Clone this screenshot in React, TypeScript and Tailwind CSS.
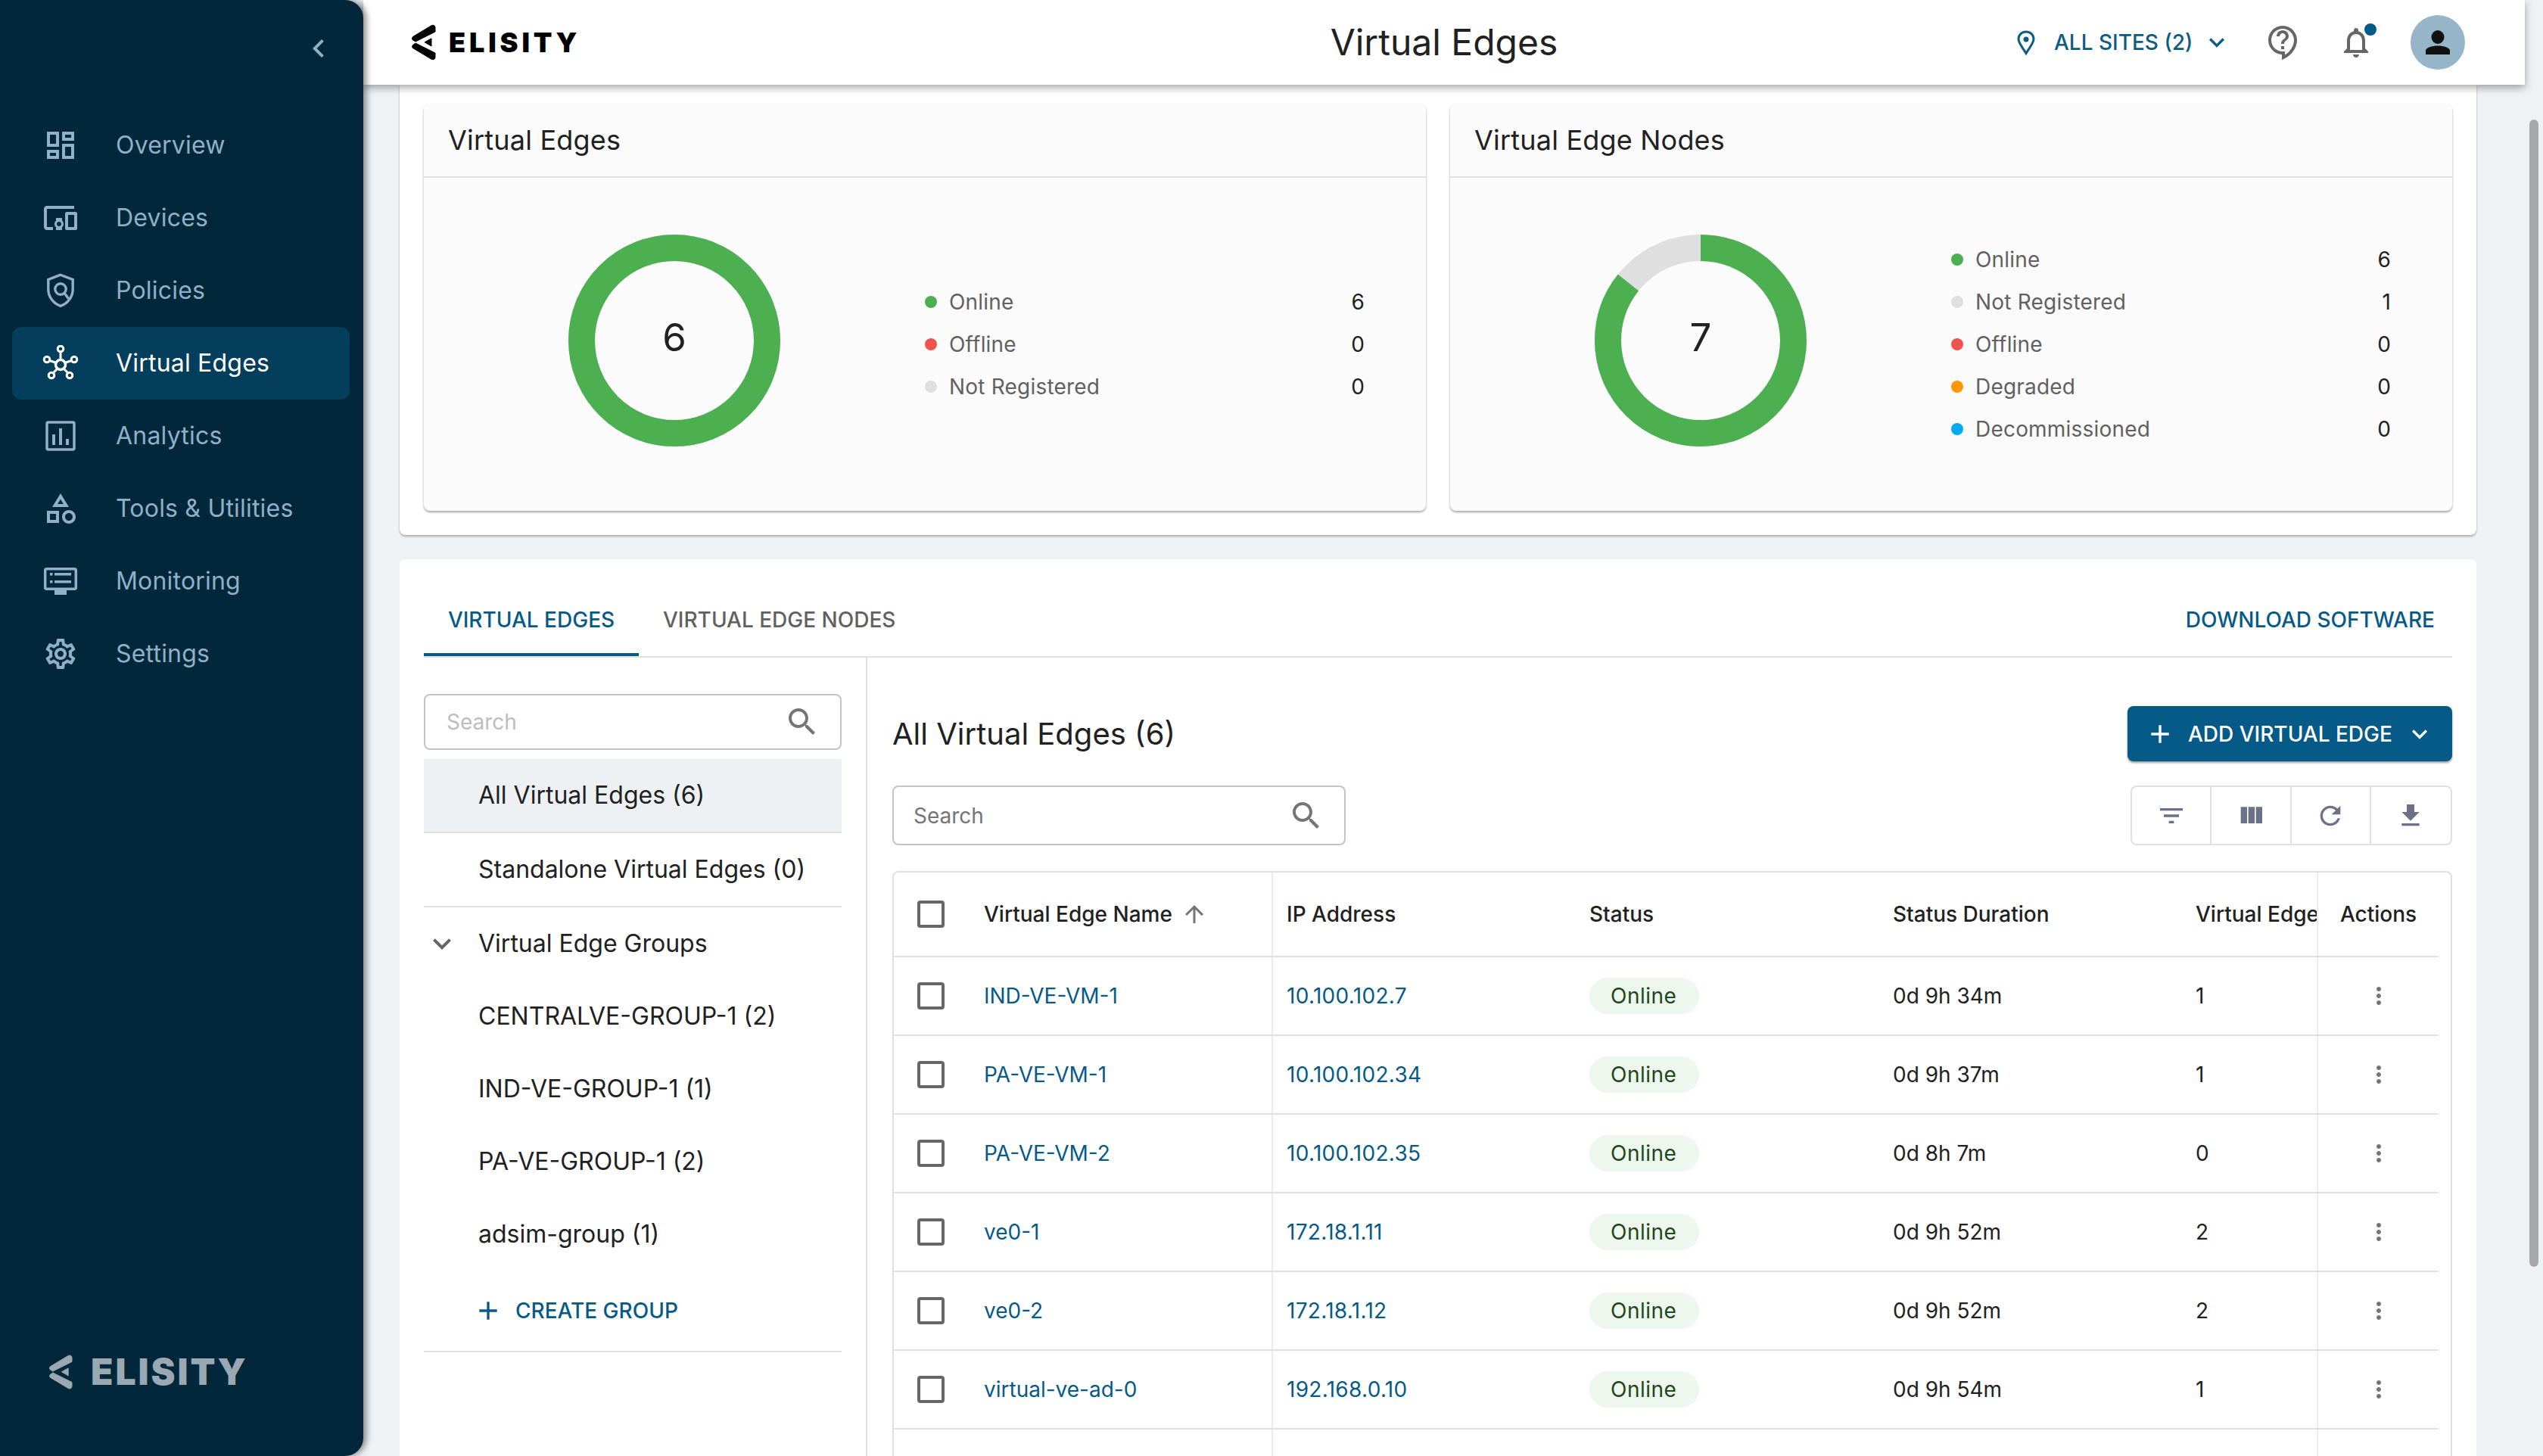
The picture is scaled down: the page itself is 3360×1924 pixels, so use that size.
import type { ReactNode } from "react"

const Icon = ({ d, className }: { d: string; className: string }) => (
  <svg viewBox="0 0 24 24" fill="currentColor" className={className}>
    <path d={d} />
  </svg>
)

const paths = {
  dashboard:
    "M19 5v2h-4V5h4M9 5v6H5V5h4m10 8v6h-4v-6h4M9 17v2H5v-2h4M21 3h-8v6h8V3zM11 3H3v10h8V3zm10 8h-8v10h8V11zm-10 4H3v6h8v-6z",
  devices:
    "M3 6h18V4H3c-1.1 0-2 .9-2 2v12c0 1.1.9 2 2 2h4v-2H3V6zm10 6H9v1.78c-.61.55-1 1.33-1 2.22s.39 1.67 1 2.22V20h4v-1.78c.61-.55 1-1.34 1-2.22s-.39-1.67-1-2.22V12zm-2 5.5c-.83 0-1.5-.67-1.5-1.5s.67-1.5 1.5-1.5 1.5.67 1.5 1.5-.67 1.5-1.5 1.5zM22 8h-6c-.5 0-1 .5-1 1v10c0 .5.5 1 1 1h6c.5 0 1-.5 1-1V9c0-.5-.5-1-1-1zm-1 10h-4v-8h4v8z",
  category:
    "M12 2l-5.5 9h11L12 2zm0 3.84L13.93 9h-3.87L12 5.84zM17.5 13c-2.49 0-4.5 2.01-4.5 4.5s2.01 4.5 4.5 4.5 4.5-2.01 4.5-4.5-2.01-4.5-4.5-4.5zm0 7c-1.38 0-2.5-1.12-2.5-2.5s1.12-2.5 2.5-2.5 2.5 1.12 2.5 2.5-1.12 2.5-2.5 2.5zM3 21.5h8v-8H3v8zm2-6h4v4H5v-4z",
  settings:
    "M19.43 12.98c.04-.32.07-.64.07-.98 0-.34-.03-.66-.07-.98l2.11-1.65c.19-.15.24-.42.12-.64l-2-3.46c-.09-.16-.26-.25-.44-.25-.06 0-.12.01-.17.03l-2.49 1c-.52-.4-1.08-.73-1.69-.98l-.38-2.65C14.46 2.18 14.25 2 14 2h-4c-.25 0-.46.18-.49.42l-.38 2.65c-.61.25-1.17.59-1.69.98l-2.49-1c-.06-.02-.12-.03-.18-.03-.17 0-.34.09-.43.25l-2 3.46c-.13.22-.07.49.12.64l2.11 1.65c-.04.32-.07.65-.07.98 0 .33.03.66.07.98l-2.11 1.65c-.19.15-.24.42-.12.64l2 3.46c.09.16.26.25.44.25.06 0 .12-.01.17-.03l2.49-1c.52.4 1.08.73 1.69.98l.38 2.65c.03.24.24.42.49.42h4c.25 0 .46-.18.49-.42l.38-2.65c.61-.25 1.17-.59 1.69-.98l2.49 1c.06.02.12.03.18.03.17 0 .34-.09.43-.25l2-3.46c.12-.22.07-.49-.12-.64l-2.11-1.65zm-1.98-1.71c.04.31.05.52.05.73 0 .21-.02.43-.05.73l-.14 1.13.89.7 1.08.84-.7 1.21-1.27-.51-1.04-.42-.9.68c-.43.32-.84.56-1.25.73l-1.06.43-.16 1.13-.2 1.35h-1.4l-.19-1.35-.16-1.13-1.06-.43c-.43-.18-.83-.41-1.23-.71l-.91-.7-1.06.43-1.27.51-.7-1.21 1.08-.84.89-.7-.14-1.13c-.03-.31-.05-.54-.05-.74s.02-.43.05-.73l.14-1.13-.89-.7-1.08-.84.7-1.21 1.27.51 1.04.42.9-.68c.43-.32.84-.56 1.25-.73l1.06-.43.16-1.13.2-1.35h1.39l.19 1.35.16 1.13 1.06.43c.43.18.83.41 1.23.71l.91.7 1.06-.43 1.27-.51.7 1.21-1.07.85-.89.7.14 1.13zM12 8c-2.21 0-4 1.79-4 4s1.79 4 4 4 4-1.79 4-4-1.79-4-4-4zm0 6c-1.1 0-2-.9-2-2s.9-2 2-2 2 .9 2 2-.9 2-2 2z",
  help:
    "M11 23.59v-3.6c-5.01-.26-9-4.42-9-9.49C2 5.26 6.26 1 11.5 1S21 5.26 21 10.5c0 4.95-3.44 9.93-8.57 12.4L11 23.59zM11.5 3C7.36 3 4 6.36 4 10.5S7.36 18 11.5 18H13v2.3c3.64-2.3 6-6.08 6-9.8C19 6.36 15.64 3 11.5 3zm-1 11.5h2v2h-2zm2-1.5h-2c0-3.25 3-3 3-5 0-1.1-.9-2-2-2s-2 .9-2 2h-2c0-2.21 1.79-4 4-4s4 1.79 4 4c0 2.5-3 2.75-3 5z",
  bell:
    "M12 22c1.1 0 2-.9 2-2h-4c0 1.1.9 2 2 2zm6-6v-5c0-3.07-1.63-5.64-4.5-6.32V4c0-.83-.67-1.5-1.5-1.5s-1.5.67-1.5 1.5v.68C7.64 5.36 6 7.92 6 11v5l-2 2v1h16v-1l-2-2zm-2 1H8v-6c0-2.48 1.51-4.5 4-4.5s4 2.02 4 4.5v6z",
  search:
    "M15.5 14h-.79l-.28-.27C15.41 12.59 16 11.11 16 9.5 16 5.91 13.09 3 9.5 3S3 5.91 3 9.5 5.91 16 9.5 16c1.61 0 3.09-.59 4.23-1.57l.27.28v.79l5 4.99L20.49 19l-4.99-5zm-6 0C7.01 14 5 11.99 5 9.5S7.01 5 9.5 5 14 7.01 14 9.5 11.99 14 9.5 14z",
  expand: "M16.59 8.59L12 13.17 7.41 8.59 6 10l6 6 6-6z",
  collapse: "M15.41 7.41L14 6l-6 6 6 6 1.41-1.41L10.83 12z",
  add: "M19 13h-6v6h-2v-6H5v-2h6V5h2v6h6v2z",
  arrowUp: "M4 12l1.41 1.41L11 7.83V20h2V7.83l5.58 5.59L20 12l-8-8-8 8z",
  more:
    "M12 8c1.1 0 2-.9 2-2s-.9-2-2-2-2 .9-2 2 .9 2 2 2zm0 2c-1.1 0-2 .9-2 2s.9 2 2 2 2-.9 2-2-.9-2-2-2zm0 6c-1.1 0-2 .9-2 2s.9 2 2 2 2-.9 2-2-.9-2-2-2z",
  filter: "M10 18h4v-2h-4v2zM3 6v2h18V6H3zm3 7h12v-2H6v2z",
  columns: "M10 18h5V5h-5v13zm-6 0h5V5H4v13zM16 5v13h5V5h-5z",
  refresh:
    "M17.65 6.35C16.2 4.9 14.21 4 12 4c-4.42 0-7.99 3.58-7.99 8s3.57 8 7.99 8c3.73 0 6.84-2.55 7.73-6h-2.08c-.82 2.33-3.04 4-5.65 4-3.31 0-6-2.69-6-6s2.69-6 6-6c1.66 0 3.14.69 4.22 1.78L13 11h7V4l-2.35 2.35z",
  download: "M19 9h-4V3H9v6H5l7 7 7-7zM5 18v2h14v-2H5z",
}

const PolicyIcon = () => (
  <svg viewBox="0 0 24 24" fill="none" stroke="currentColor" strokeWidth="1.7" className="w-12 h-12">
    <path d="M12 1.6 3.9 4.7v6.4c0 5 3.3 9.5 8.1 11.1 4.8-1.6 8.1-6.1 8.1-11.1V4.700z" />
    <circle cx="12" cy="11" r="3.6" />
    <path d="M14.500 13.600 17.300 17.400" />
  </svg>
)

const HubIcon = () => (
  <svg viewBox="0 0 48 48" fill="none" stroke="currentColor" strokeWidth="3" className="w-12 h-12">
    <circle cx="24" cy="26" r="6.500" strokeWidth="3.500" />
    <circle cx="24" cy="5" r="3.800" />
    <circle cx="6" cy="19" r="3.800" />
    <circle cx="42" cy="19" r="3.800" />
    <circle cx="12" cy="40" r="3.800" />
    <circle cx="36" cy="40" r="3.800" />
    <path d="M24 9v11M9.500 20.500l9 3M38.500 20.500l-9 3M14 37l6-6M34 37l-6-6" />
  </svg>
)

const AnalyticsIcon = () => (
  <svg viewBox="0 0 48 48" fill="currentColor" className="w-12 h-12">
    <rect x="6" y="6" width="36" height="36" rx="2" fill="none" stroke="currentColor" strokeWidth="3.500" />
    <rect x="13" y="22" width="4" height="14" />
    <rect x="22" y="14" width="4" height="22" />
    <rect x="31" y="28" width="4" height="8" />
  </svg>
)

const MonitorIcon = () => (
  <svg viewBox="0 0 48 48" fill="currentColor" className="w-12 h-12">
    <rect x="3.700" y="7.700" width="40.600" height="26.600" rx="2" fill="none" stroke="currentColor" strokeWidth="3.500" />
    <rect x="16" y="36" width="16" height="6" />
    <rect x="10" y="13" width="3.500" height="3.500" />
    <rect x="16" y="13" width="22" height="3.500" />
    <rect x="10" y="23" width="3.500" height="3.500" />
    <rect x="16" y="23" width="22" height="3.500" />
  </svg>
)

const LogoMark = ({ className }: { className: string }) => (
  <svg viewBox="0 0 33 48" className={className} fill="currentColor" stroke="currentColor" strokeWidth="1" strokeLinejoin="round">
    <path d="M27.500 1.500Q31.500 .5 32 4.500V10L6 23 2 20.500Q.5 19 2.500 16.500Z" />
    <path d="M2.500 27.500 6 25 32 38V43.500Q31.500 47.500 27.500 46.500L2.500 31.500Q.5 29.500 2.500 27.500Z" />
    <path d="M18 23.800 27 18.800V29Z" />
  </svg>
)

const navItems: { label: string; icon: ReactNode; active?: boolean }[] = [
  { label: "Overview", icon: <Icon d={paths.dashboard} className="w-12 h-12" /> },
  { label: "Devices", icon: <Icon d={paths.devices} className="w-12 h-12" /> },
  { label: "Policies", icon: <PolicyIcon /> },
  { label: "Virtual Edges", icon: <HubIcon />, active: true },
  { label: "Analytics", icon: <AnalyticsIcon /> },
  { label: "Tools & Utilities", icon: <Icon d={paths.category} className="w-12 h-12" /> },
  { label: "Monitoring", icon: <MonitorIcon /> },
  { label: "Settings", icon: <Icon d={paths.settings} className="w-12 h-12" /> },
]

const edges = [
  { name: "IND-VE-VM-1", ip: "10.100.102.7", duration: "0d 9h 34m", nodes: 1 },
  { name: "PA-VE-VM-1", ip: "10.100.102.34", duration: "0d 9h 37m", nodes: 1 },
  { name: "PA-VE-VM-2", ip: "10.100.102.35", duration: "0d 8h 7m", nodes: 0 },
  { name: "ve0-1", ip: "172.18.1.11", duration: "0d 9h 52m", nodes: 2 },
  { name: "ve0-2", ip: "172.18.1.12", duration: "0d 9h 52m", nodes: 2 },
  { name: "virtual-ve-ad-0", ip: "192.168.0.10", duration: "0d 9h 54m", nodes: 1 },
]

const groups = ["CENTRALVE-GROUP-1 (2)", "IND-VE-GROUP-1 (1)", "PA-VE-GROUP-1 (2)", "adsim-group (1)"]

function Sidebar() {
  return (
    <aside className="w-[480px] h-full shrink-0 relative z-20 flex flex-col bg-[#02273b] rounded-r-[24px] shadow-[4px_0_8px_rgba(0,0,0,0.45)]">
      <div className="h-[144px] flex items-start justify-end pt-10 pr-[35px] text-[#8fb0c6]">
        <Icon d={paths.collapse} className="w-12 h-12" />
      </div>
      <nav className="flex flex-col">
        {navItems.map((item) => (
          <div
            key={item.label}
            className={
              item.active
                ? "h-24 ml-4 mr-[18px] pl-10 flex items-center gap-[49px] rounded-xl bg-[#033e5c] text-white text-[32px] tracking-[0.2px]"
                : "h-24 ml-4 mr-[18px] pl-10 flex items-center gap-[49px] text-[#8fb0c6] text-[32px] tracking-[0.2px]"
            }
          >
            {item.icon}
            <span>{item.label}</span>
          </div>
        ))}
      </nav>
      <div className="mt-auto mb-[87px] ml-16 flex items-center gap-6 text-[#9aa8b2]">
        <LogoMark className="w-8 h-12" />
        <span className="text-[48px] leading-none font-black tracking-[3px]">ELISITY</span>
      </div>
    </aside>
  )
}

function Header() {
  return (
    <header className="w-[2856px] h-28 shrink-0 relative z-10 bg-white shadow-[0_4px_10px_rgba(0,0,0,0.35)] flex items-center">
      <div className="w-[1068px] pl-[63px] flex items-center gap-[17px] text-black">
        <LogoMark className="w-[33px] h-12" />
        <span className="text-[36px] leading-none font-black tracking-[4.900px]">ELISITY</span>
      </div>
      <h1 className="w-[720px] text-center text-[48px] text-[#212121]">Virtual Edges</h1>
      <div className="flex-1 flex items-center pl-[397px] text-[#0d5d80]">
        <svg viewBox="0 0 24 33" fill="none" stroke="currentColor" strokeWidth="3" className="w-6 h-[33px]">
          <path d="M12 30.500C7 22 2 17 2 11.500 2 5.800 6.500 2 12 2s10 3.800 10 9.500c0 5.500-5 10.500-10 19z" />
          <circle cx="12" cy="12" r="3.500" fill="currentColor" stroke="none" />
        </svg>
        <span className="ml-[25px] text-[28px] font-medium">ALL SITES (2)</span>
        <Icon d={paths.expand} className="w-10 h-10 ml-3" />
        <Icon d={paths.help} className="w-12 h-12 ml-[44px] text-[#666]" />
        <div className="relative ml-[48px]">
          <Icon d={paths.bell} className="w-12 h-12 text-[#666]" />
          <span className="absolute top-[-1px] right-[-3px] w-4 h-4 rounded-full bg-[#065a88]" />
        </div>
        <div className="ml-12 w-[72px] h-[72px] rounded-full bg-[#97b5c8] flex items-center justify-center">
          <svg viewBox="0 0 72 72" className="w-[72px] h-[72px]" fill="#111">
            <ellipse cx="36" cy="29" rx="8.500" ry="9" />
            <path d="M20 52v-5c0-4 8-6.500 16-6.500s16 2.500 16 6.500v5z" />
          </svg>
        </div>
      </div>
    </header>
  )
}

function Donut({ total, registered }: { total: number; registered: number }) {
  const r = 122.5
  const circ = 2 * Math.PI * r
  return (
    <div className="relative w-[280px] h-[280px] shrink-0 mb-[10px]">
      <svg viewBox="0 0 280 280" className="w-[280px] h-[280px] -rotate-90">
        <circle cx="140" cy="140" r={r} fill="none" stroke="#dfdfdf" strokeWidth="35" />
        <circle
          cx="140"
          cy="140"
          r={r}
          fill="none"
          stroke="#4caf50"
          strokeWidth="35"
          strokeDasharray={`${(registered / total) * circ} ${circ}`}
        />
      </svg>
      <div className="absolute inset-0 flex items-center justify-center pb-[8px] text-[51px] text-[#212121]">
        {total}
      </div>
    </div>
  )
}

function StatCard({
  title,
  total,
  online,
  legend,
}: {
  title: string
  total: number
  online: number
  legend: { label: string; value: number; dot: string }[]
}) {
  return (
    <div className="flex-1 h-[538px] bg-[#fbfbfb] rounded-lg shadow-[0_2px_3px_rgba(0,0,0,0.35)]">
      <div className="h-[98px] px-8 flex items-center border-b-2 border-[#e0e0e0] text-[36px] text-[#212121] tracking-[0.2px]">
        {title}
      </div>
      <div className="h-[440px] flex items-center pl-[191px]">
        <Donut total={total} registered={online} />
        <div className="ml-[191px] w-[581px] flex flex-col">
          {legend.map((row) => (
            <div key={row.label} className="h-14 flex items-center text-[28px] tracking-[0.2px]">
              <span className={`w-4 h-4 rounded-full ${row.dot}`} />
              <span className="ml-4 text-[#616161]">{row.label}</span>
              <span className="ml-auto text-[#212121]">{row.value}</span>
            </div>
          ))}
        </div>
      </div>
    </div>
  )
}

function SearchBox({ className, textClass, iconClass }: { className: string; textClass: string; iconClass: string }) {
  return (
    <div className={`flex items-center justify-between border-2 border-[#c4c4c4] rounded-lg bg-white ${className}`}>
      <span className={textClass}>Search</span>
      <Icon d={paths.search} className={iconClass} />
    </div>
  )
}

function GroupPanel() {
  return (
    <div className="w-[586px] shrink-0 border-r-2 border-[#e0e0e0] pr-[32px] pt-12">
      <SearchBox
        className="h-[74px] pl-7 pr-[26px]"
        textClass="text-[28px] text-[#bdbdbd]"
        iconClass="w-12 h-12 text-[#757575]"
      />
      <div className="mt-3 text-[32px] text-[#212121]">
        <div className="h-[98px] pl-[72px] flex items-center bg-[#edf1f4] border-b-2 border-[#e0e0e0]">
          All Virtual Edges (6)
        </div>
        <div className="h-[98px] pl-[72px] flex items-center border-b-2 border-[#e0e0e0]">
          Standalone Virtual Edges (0)
        </div>
        <div className="h-24 flex items-center">
          <Icon d={paths.expand} className="w-12 h-12 text-[#666]" />
          <span className="ml-6">Virtual Edge Groups</span>
        </div>
        {groups.map((group) => (
          <div key={group} className="h-24 pl-[72px] flex items-center">
            {group}
          </div>
        ))}
        <div className="h-[108px] pl-[65px] flex items-center border-b-2 border-[#e0e0e0] text-[#065a88] text-[28px] font-medium">
          <Icon d={paths.add} className="w-10 h-10" />
          <span className="ml-4">CREATE GROUP</span>
        </div>
      </div>
    </div>
  )
}

const Checkbox = () => <span className="w-9 h-9 shrink-0 border-[4px] border-[#666] rounded-[4px]" />

function EdgeTable() {
  return (
    <div className="mt-[34px] border-2 border-[#e0e0e0] rounded-t-lg border-b-0 text-[28px] text-[#212121]">
      <div className="w-[2041px] h-[112px] flex border-b-2 border-[#e0e0e0] font-medium">
        <div className="w-[501px] pl-[31px] flex items-center gap-[52px] border-r-2 border-[#ececec]">
          <Checkbox />
          <span>Virtual Edge Name</span>
          <Icon d={paths.arrowUp} className="w-9 h-9 -ml-[41px] text-[#757575]" />
        </div>
        <div className="w-[399px] pl-[18px] flex items-center">IP Address</div>
        <div className="w-[401px] pl-[19px] flex items-center">Status</div>
        <div className="w-[400px] pl-[19px] flex items-center">Status Duration</div>
        <div className="w-[179px] pl-[19px] flex items-center overflow-hidden whitespace-nowrap">Virtual Edge</div>
        <div className="w-[161px] flex items-center justify-center border-l-2 border-[#ececec]">Actions</div>
      </div>
      {edges.map((edge) => (
        <div key={edge.name} className="w-[2041px] h-[104px] flex border-b-2 border-[#e0e0e0]">
          <div className="w-[501px] pl-[31px] flex items-center gap-[52px] border-r-2 border-[#ececec] text-[#065a88]">
            <Checkbox />
            <span>{edge.name}</span>
          </div>
          <div className="w-[399px] pl-[18px] flex items-center text-[#065a88] tracking-[0.3px]">{edge.ip}</div>
          <div className="w-[401px] pl-[19px] flex items-center">
            <span className="h-12 pl-7 pr-[30px] flex items-center rounded-full bg-[#edf7ed] text-[#1e4620] tracking-[0.5px]">
              Online
            </span>
          </div>
          <div className="w-[400px] pl-[19px] flex items-center">{edge.duration}</div>
          <div className="w-[179px] pl-[19px] flex items-center">{edge.nodes}</div>
          <div className="w-[161px] flex items-center justify-center border-l-2 border-[#ececec]">
            <Icon d={paths.more} className="w-9 h-9 text-[#757575]" />
          </div>
        </div>
      ))}
      <div className="w-[2041px] h-[40px] flex">
        <div className="w-[501px] border-r-2 border-[#ececec]" />
        <div className="w-[1379px]" />
        <div className="w-[161px] border-l-2 border-[#ececec]" />
      </div>
    </div>
  )
}

function EdgeList() {
  return (
    <div className="flex-1 pl-[33px] pt-16">
      <div className="h-[73px] flex items-center justify-between">
        <h2 className="text-[40px] text-[#212121]">All Virtual Edges (6)</h2>
        <div className="w-[429px] h-[73px] flex items-center pl-[23px] bg-[#065a88] rounded-lg text-white text-[28px] font-medium shadow-[0_2px_3px_rgba(0,0,0,0.4)]">
          <Icon d={paths.add} className="w-10 h-10" />
          <span className="ml-[17px]">ADD VIRTUAL EDGE</span>
          <Icon d={paths.expand} className="w-10 h-10 ml-4" />
        </div>
      </div>
      <div className="mt-8 h-[79px] flex items-center justify-between">
        <SearchBox
          className="w-[599px] h-[79px] pl-[26px] pr-[26px]"
          textClass="text-[28px] text-[#757575]"
          iconClass="w-12 h-12 text-[#757575]"
        />
        <div className="w-[425px] h-[79px] grid grid-cols-4 border-2 border-[#e0e0e0] rounded-lg text-[#6b7188]">
          {[paths.filter, paths.columns, paths.refresh, paths.download].map((d, i) => (
            <div
              key={d}
              className={
                i < 3
                  ? "flex items-center justify-center border-r-2 border-[#e0e0e0]"
                  : "flex items-center justify-center"
              }
            >
              <Icon d={d} className="w-10 h-10" />
            </div>
          ))}
        </div>
      </div>
      <EdgeTable />
    </div>
  )
}

export default function App() {
  const edgeLegend = [
    { label: "Online", value: 6, dot: "bg-[#4caf50]" },
    { label: "Offline", value: 0, dot: "bg-[#ef5350]" },
    { label: "Not Registered", value: 0, dot: "bg-[#dfdfdf]" },
  ]
  const nodeLegend = [
    { label: "Online", value: 6, dot: "bg-[#4caf50]" },
    { label: "Not Registered", value: 1, dot: "bg-[#dfdfdf]" },
    { label: "Offline", value: 0, dot: "bg-[#ef5350]" },
    { label: "Degraded", value: 0, dot: "bg-[#ff9800]" },
    { label: "Decommissioned", value: 0, dot: "bg-[#03a9f4]" },
  ]

  return (
    <div className="relative w-[3360px] h-[1924px] overflow-hidden flex bg-[#eef2f5] font-['Inter',sans-serif]">
      <Sidebar />
      <main className="flex-1 h-full flex flex-col min-w-0">
        <Header />
        <section className="ml-12 w-[2744px] shrink-0 px-8 pt-[25px] pb-8 flex gap-8 bg-white rounded-b-lg shadow-[0_2px_3px_rgba(0,0,0,0.3)]">
          <StatCard title="Virtual Edges" total={6} online={6} legend={edgeLegend} />
          <StatCard title="Virtual Edge Nodes" total={7} online={6} legend={nodeLegend} />
        </section>
        <section className="ml-12 mt-8 w-[2744px] flex-1 min-h-0 px-8 pt-8 bg-white rounded-t-lg">
          <div className="h-[98px] flex border-b-2 border-[#e0e0e0] text-[28px] font-medium">
            <div className="w-[284px] h-24 pt-1 flex items-center justify-center border-b-4 border-[#065a88] text-[#065a88]">
              VIRTUAL EDGES
            </div>
            <div className="ml-8 h-24 flex items-center text-[#616161]">VIRTUAL EDGE NODES</div>
            <div className="ml-auto mr-[23px] h-24 flex items-center text-[#065a88]">DOWNLOAD SOFTWARE</div>
          </div>
          <div className="flex">
            <GroupPanel />
            <EdgeList />
          </div>
        </section>
      </main>
      <div className="absolute right-[6px] top-[158px] w-3 h-[1516px] rounded-full bg-[#a9a9a9] z-30" />
    </div>
  )
}
